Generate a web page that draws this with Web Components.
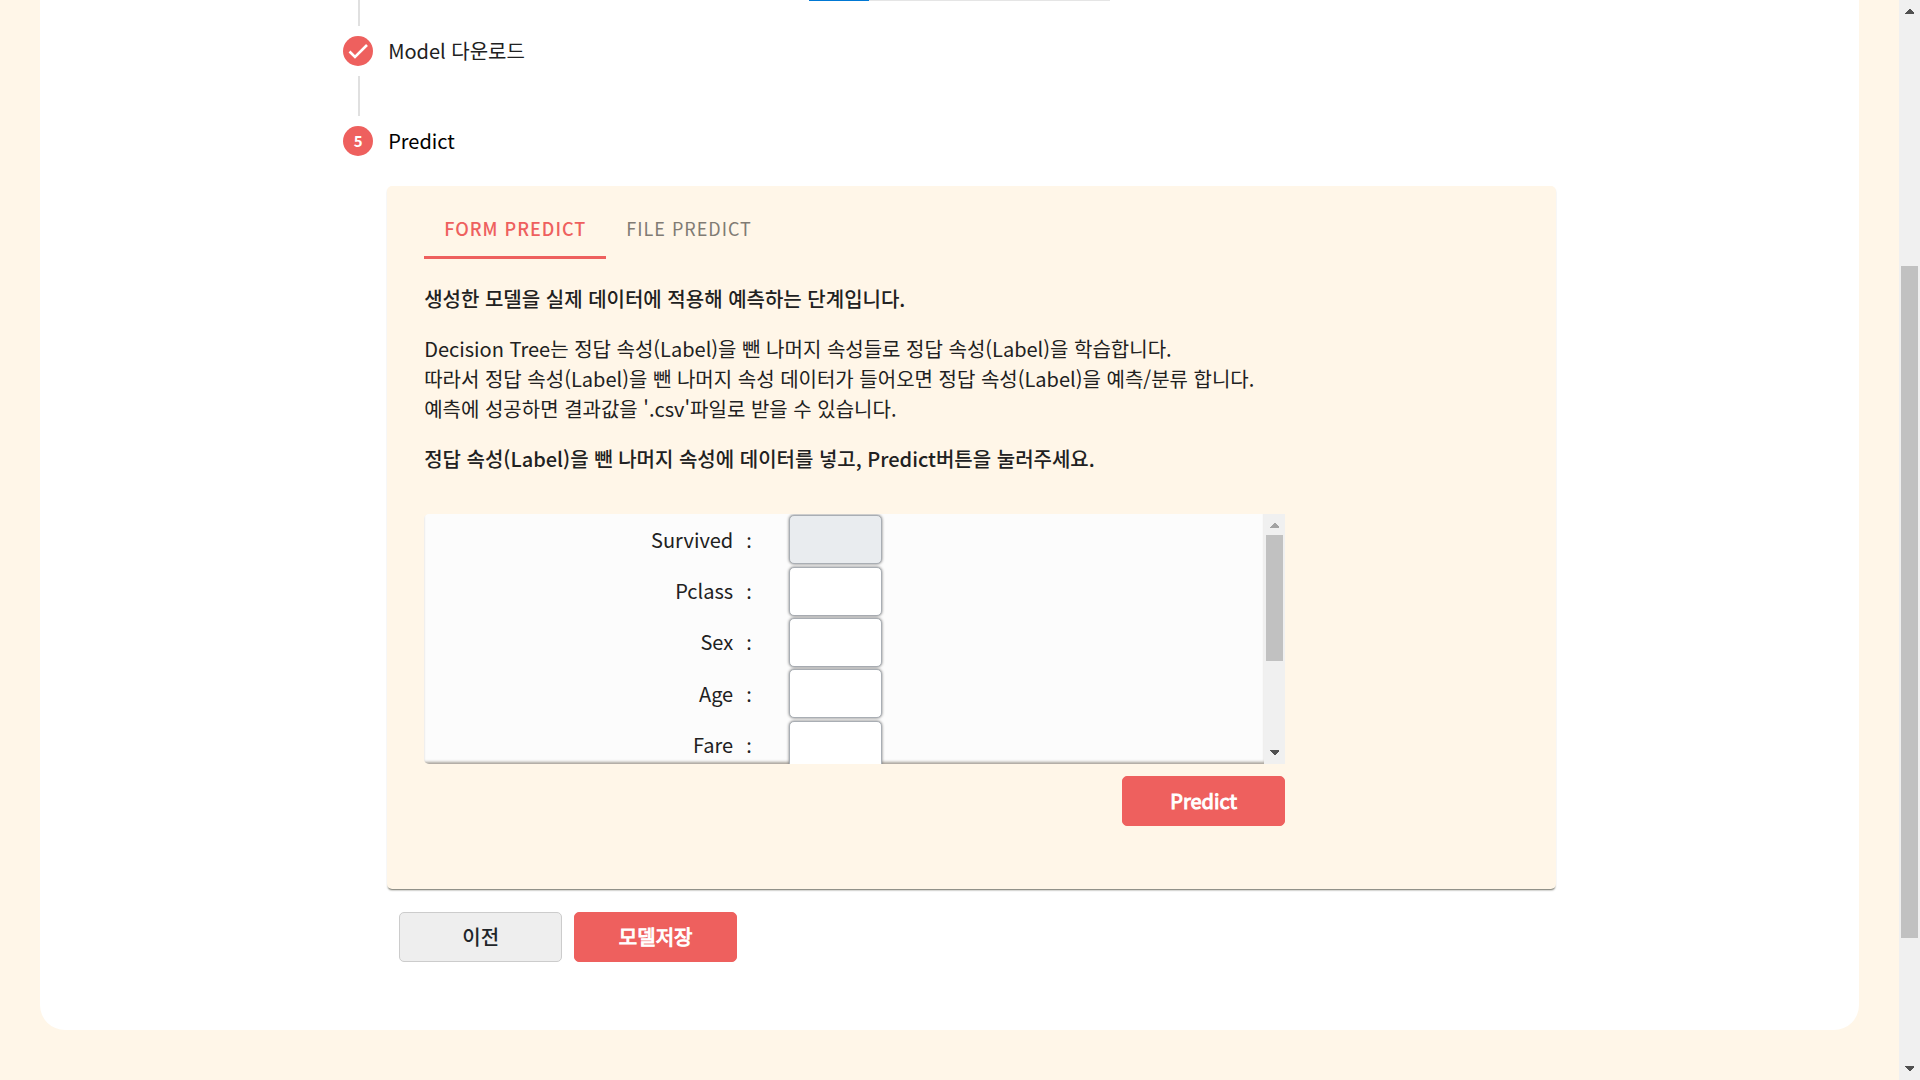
<!DOCTYPE html>
<html lang="ko">
<head>
<meta charset="utf-8">
<title>Decision Tree - Predict</title>
<style>
  html, body { height: 100%; }
  body { margin: 0; overflow: hidden; background: #fff6e8; color: #212121; font: 20px/30px "Noto Sans CJK KR", sans-serif; }
</style>
</head>
<body>
<predict-page></predict-page>
<script>
const define = (name, html) => customElements.define(name, class extends HTMLElement {
  constructor() {
    super();
    const t = document.createElement('template');
    t.innerHTML = html;
    this.attachShadow({ mode: 'open' }).append(t.content.cloneNode(true));
  }
});

define('scroll-rail', `
<style>
  :host { display: flex; flex-direction: column; flex: 0 0 21px; background: #f0f0f0; }
  svg { display: block; width: 21px; height: 21px; flex: none; fill: #505050; }
  svg.up { fill: var(--up, #505050); }
  .track { flex: 1; display: flex; flex-direction: column; padding: 0 2px; }
  .before { flex: var(--before, 0) 0 0px; }
  .thumb { flex: var(--thumb, 1) 0 0px; background: #c1c1c1; }
  .after { flex: var(--after, 1) 0 0px; }
</style>
<svg class="up" viewBox="0 0 21 21" shape-rendering="crispEdges"><path d="M6 14V13L10 9H11L15 13V14Z"/></svg>
<div class="track"><div class="before"></div><div class="thumb"></div><div class="after"></div></div>
<svg viewBox="0 0 21 21" shape-rendering="crispEdges"><path d="M6 7V8L10 12H11L15 8V7Z"/></svg>
`);

define('step-label', `
<style>
  :host { display: flex; align-items: center; gap: 15px; height: 30px; }
  .dot { flex: none; width: 30px; height: 30px; border-radius: 50%; background: #ee605e; color: #fff; display: grid; place-items: center; font-size: 15px; line-height: 30px; font-weight: 700; }
  :host([active]) { color: #000; }
</style>
<span class="dot"><slot name="icon"></slot></span><span><slot></slot></span>
`);

define('step-line', `
<style>
  :host { display: block; width: 2px; height: 40px; margin: 10px 0 10px 15px; background: #e0e0e0; }
  :host([first]) { height: 26px; margin-top: 0; }
</style>
`);

define('app-button', `
<style>
  :host { display: inline-block; }
  button { box-sizing: border-box; display: block; width: 163px; height: 50px; padding: 0; border: 1px solid #ee605e; border-radius: 5px; background: #ee605e; color: #fff; font: inherit; -webkit-text-stroke: 1px currentColor; cursor: pointer; }
  :host([secondary]) button { background: #eee; border-color: #ccc; color: #212529; -webkit-text-stroke: 0; font-weight: 500; }
</style>
<button type="button"><slot></slot></button>
`);

define('tab-button', `
<style>
  :host { display: block; }
  button { box-sizing: border-box; height: 60px; padding: 1px 20px 0; border: 0; border-bottom: 3px solid transparent; background: none; color: #807b74; font: inherit; font-size: 18px; letter-spacing: 1px; cursor: pointer; }
  :host([selected]) button { color: #ee605e; border-color: #ee605e; font-weight: 500; }
</style>
<button type="button" role="tab"><slot></slot></button>
`);

customElements.define('field-row', class extends HTMLElement {
  constructor() {
    super();
    this.attachShadow({ mode: 'open' }).innerHTML = `
<style>
  :host { display: flex; align-items: center; }
  label { display: flex; justify-content: flex-end; gap: 13px; width: 39%; }
  input { box-sizing: border-box; width: 93px; height: 49px; margin: 0 0 0 37px; padding: 0 12px; border: 1px solid #a9aeb4; border-radius: 5px; background: #fff; box-shadow: 0 0 3px #777; font: inherit; }
  input:disabled { background: #e9ecef; }
</style>
<label for="value" lang="en"><span></span><span>:</span></label><input id="value" type="text">`;
    this.shadowRoot.querySelector('span').textContent = this.getAttribute('name');
    this.shadowRoot.querySelector('input').disabled = this.hasAttribute('disabled');
  }
});

define('field-list', `
<style>
  :host { display: flex; height: 250px; border-radius: 5px 0 0 5px; overflow: hidden; background: #fcfcfc; }
  .view { flex: 1; overflow: hidden; box-shadow: inset 0 -3px 3px -1px #a8a29a; }
  .rows { display: grid; grid-auto-rows: 1fr; height: 257px; }
  scroll-rail { --up: #a3a3a3; --before: 0; --thumb: 126; --after: 82; }
</style>
<div class="view"><div class="rows"><slot></slot></div></div>
<scroll-rail></scroll-rail>
`);

define('predict-panel', `
<style>
  :host { display: block; box-sizing: border-box; min-height: 703px; padding: 13px 37px; background: #fff6e8; border-radius: 5px; box-shadow: 0 2px 2px -1px #6b6b60; }
  nav { display: flex; }
  p { margin: 20px 0; }
  .intro { margin-top: 25px; }
  b { font-weight: 500; }
  .form { max-width: 861px; margin-top: 40px; }
  .actions { display: flex; justify-content: flex-end; margin-top: 12px; }
</style>
<nav role="tablist"><tab-button selected>FORM PREDICT</tab-button><tab-button>FILE PREDICT</tab-button></nav>
<p class="intro"><b>생성한 모델을 실제 데이터에 적용해 예측하는 단계입니다.</b></p>
<p>Decision Tree는 정답 속성(Label)을 뺀 나머지 속성들로 정답 속성(Label)을 학습합니다.<br>따라서 정답 속성(Label)을 뺀 나머지 속성 데이터가 들어오면 정답 속성(Label)을 예측/분류 합니다.<br>예측에 성공하면 결과값을 '.csv'파일로 받을 수 있습니다.</p>
<p><b>정답 속성(Label)을 뺀 나머지 속성에 데이터를 넣고, Predict버튼을 눌러주세요.</b></p>
<div class="form">
  <field-list>
    <field-row name="Survived" disabled></field-row>
    <field-row name="Pclass"></field-row>
    <field-row name="Sex"></field-row>
    <field-row name="Age"></field-row>
    <field-row name="Fare"></field-row>
  </field-list>
  <div class="actions"><app-button>Predict</app-button></div>
</div>
`);

define('predict-page', `
<style>
  :host { display: flex; height: 100%; }
  main { flex: 1; padding: 0 40px 50px; }
  .card { background: #fff; border-radius: 0 0 25px 25px; padding-bottom: 68px; display: flex; flex-direction: column; align-items: center; }
  .progress { display: flex; width: 301px; height: 1px; margin: 0 0 -1px 20px; background: #e5e5e5; }
  .progress i { width: 20%; background: #0078d4; }
  .steps { width: 66.6667%; }
  .body { margin: 30px 0 0 44px; }
  .actions { display: flex; gap: 12px; margin: 23px 12px 0; }
  .page-rail { --before: 245; --thumb: 672; --after: 121; }
</style>
<main><div class="card">
  <div class="progress"><i></i></div>
  <div class="steps">
    <step-line first></step-line>
    <step-label><svg slot="icon" width="30" height="30" viewBox="0 0 30 30" fill="none" stroke="#fff" stroke-width="2.6"><path d="M6.5 15.5L12 21L24 9"/></svg>Model 다운로드</step-label>
    <step-line></step-line>
    <step-label active><span slot="icon">5</span>Predict</step-label>
    <div class="body">
      <predict-panel></predict-panel>
      <div class="actions"><app-button secondary>이전</app-button><app-button>모델저장</app-button></div>
    </div>
  </div>
</div></main>
<scroll-rail class="page-rail"></scroll-rail>
`);
</script>
</body>
</html>
